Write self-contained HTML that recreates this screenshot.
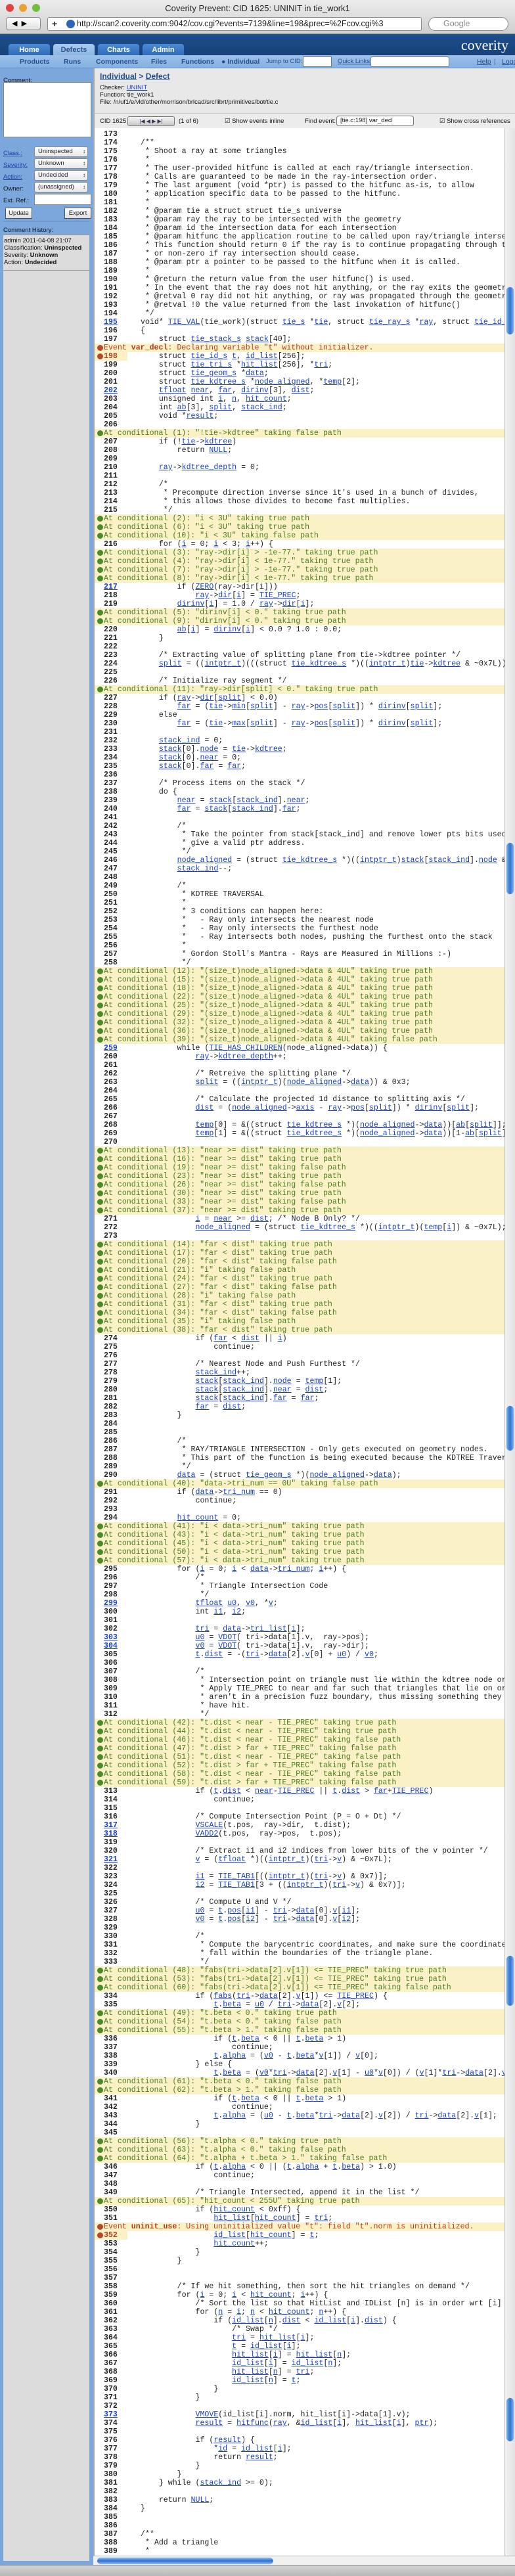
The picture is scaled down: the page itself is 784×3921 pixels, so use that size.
<!DOCTYPE html>
<html><head><meta charset="utf-8">
<style>
*{margin:0;padding:0;box-sizing:border-box}
body{width:784px;height:3921px;position:relative;overflow:hidden;background:#d8d8d8;font-family:"Liberation Sans",sans-serif}
.chrome{position:absolute;left:0;top:0;width:784px;height:52px;background:linear-gradient(#ececec,#cfcfcf);border-bottom:1px solid #8a8a8a}
.title{position:absolute;top:5px;left:0;width:784px;text-align:center;font-size:13px;color:#222}
.dot{position:absolute;top:6px;width:12px;height:12px;border-radius:50%}
.nb{position:absolute;top:26px;height:20px;border:1px solid #8c8c8c;border-radius:4px;background:linear-gradient(#fff,#e0e0e0)}
.url{position:absolute;left:72px;top:26px;width:570px;height:21px;background:#fff;border:1px solid #8c8c8c;border-radius:3px;font-size:12.5px;line-height:19px;padding-left:44px;color:#222;white-space:nowrap;overflow:hidden}
.gsearch{position:absolute;left:652px;top:26px;width:122px;height:21px;background:#fff;border:1px solid #8c8c8c;border-radius:11px;font-size:12.5px;line-height:19px;padding-left:22px;color:#888}
.hdr{position:absolute;left:0;top:52px;width:784px;height:32px;background:linear-gradient(#1c4f8e,#174178)}
.tab{position:absolute;top:66px;height:18px;width:65px;border-radius:5px 5px 0 0;background:linear-gradient(#4c8bd6,#2f6bb8);color:#fff;font-weight:bold;font-size:11px;text-align:center;line-height:18px;border:1px solid #1a4a8a;border-bottom:none}
.tab.act{background:linear-gradient(#a9cbf0,#8db6e3);color:#2a5590}
.logo{position:absolute;right:10px;top:56px;color:#fff;font-family:"Liberation Serif",serif;font-size:22px}
.navb{position:absolute;left:0;top:84px;width:784px;height:20px;background:linear-gradient(#9cc1ea,#84b0e0);border-bottom:1px solid #5d8cc4;font-size:10.5px;font-weight:bold;color:#24508f}
.navb span{position:absolute;top:4px}
.side{position:absolute;left:0;top:104px;width:142px;height:3801px;background:#7ba7dd}
.side .lbl{position:absolute;left:5px;font-size:9.5px;color:#111}
.side .lk{color:#1a3fa0;text-decoration:underline}
.sel{position:absolute;left:52px;width:82px;height:16px;background:linear-gradient(#fff,#e8e8e8);border:1px solid #8a8a8a;border-radius:3px;font-size:9.5px;line-height:14px;padding-left:5px;color:#222}
.sel:after{content:"\2195";position:absolute;right:3px;top:0;font-size:8px}
.btn{position:absolute;height:17px;border:1px solid #555;background:linear-gradient(#fff,#dcdcdc);font-size:9.5px;line-height:15px;text-align:center;color:#222}
.gbox{position:absolute;left:5px;top:253px;width:131px;height:3541px;background:#dcdcdc;border-top:1px solid #999}
.gbox div{font-size:9.5px;line-height:11px;color:#111;padding-left:1px}
.info{position:absolute;left:142px;top:104px;width:642px;height:68px;background:#e8e8e8;border-left:2px solid #aaa}
.info div{position:absolute;left:8px;font-size:9.5px;color:#111}
.tb{position:absolute;left:142px;top:172px;width:642px;height:23px;background:#ececec;border-top:1px solid #c8c8c8;border-left:2px solid #aaa;font-size:9.5px;color:#111}
.tb span{position:absolute;top:6px}
.pane{position:absolute;left:142px;top:195px;width:626px;height:3695px;background:#fff;overflow:hidden;border-left:2px solid #aaa;font-family:"Liberation Mono",monospace;font-size:11.6px;color:#222}
.rows{position:absolute;left:0;top:3px;width:1400px}
.r{height:13px;line-height:13px;position:relative;white-space:pre}
.n{position:absolute;left:14px;top:0;font-weight:bold;color:#222}
.c{position:absolute;left:70px;top:0}
.n u{color:#1a3fc0}
u{color:#1a3fc0;text-decoration:underline}
.e{height:13px;line-height:13px;background:#faf2c6;white-space:pre;position:relative;width:624px;padding-left:14px}
.g{color:#4b7d1f}
.rd{color:#b23a1c}
.e:before{content:"";position:absolute;left:4px;top:2px;width:9px;height:9px;border-radius:50%;background:#4b8a2a}
.e.rd:before{background:#b5482a}
.rn .n{color:#b23a1c;background:#faf2c6;left:0;width:50px;padding-left:14px}
.rn:before{content:"";position:absolute;left:4px;top:2px;width:9px;height:9px;border-radius:50%;background:#b5482a;z-index:2}
.vs{position:absolute;left:768px;top:195px;width:16px;height:3695px;background:linear-gradient(90deg,#f2f2f2,#e2e2e2);border-left:1px solid #bbb}
.th{position:absolute;left:2px;width:11px;border-radius:6px;background:linear-gradient(90deg,#7fb0ee,#2f73d2,#7fb0ee)}
.hs{position:absolute;left:142px;top:3890px;width:642px;height:14px;background:#f0f0f0;border-top:1px solid #bbb}
.hth{position:absolute;left:6px;top:2px;width:268px;height:10px;border-radius:6px;background:linear-gradient(#8fbcf2,#2f73d2,#8fbcf2)}
.stat{position:absolute;left:0;top:3904px;width:784px;height:17px;background:linear-gradient(#d4d4d4,#b8b8b8);border-top:1px solid #888}
</style></head><body>
<div class="chrome">
<div class="dot" style="left:9px;background:#e0443c"></div>
<div class="dot" style="left:29px;background:#e7a332"></div>
<div class="dot" style="left:49px;background:#6fbe3c"></div>
<div class="title">Coverity Prevent: CID 1625: UNINIT in tie_work1</div>
<div class="nb" style="left:9px;width:53px;font-size:11px;line-height:18px;padding-left:8px">◀ &nbsp;▶</div>
<div class="url"><span style="position:absolute;left:6px;top:0;font-weight:bold;font-size:14px">+</span><span style="position:absolute;left:28px;top:3px;width:13px;height:13px;border-radius:50%;background:#2b66b8"></span>http://scan2.coverity.com:9042/cov.cgi?events=7139&amp;line=198&amp;prec=%2Fcov.cgi%3</div>
<div class="gsearch">Google</div>
</div>
<div class="hdr"></div>
<div class="logo">coverity</div>
<div class="tab" style="left:12px">Home</div>
<div class="tab act" style="left:80px">Defects</div>
<div class="tab" style="left:148px">Charts</div>
<div class="tab" style="left:216px">Admin</div>
<div class="navb">
<span style="left:30px">Products</span><span style="left:97px">Runs</span><span style="left:146px">Components</span><span style="left:230px">Files</span><span style="left:276px">Functions</span><span style="left:337px">● Individual</span>
<span style="left:405px;font-weight:normal;font-size:9.5px">Jump to CID:</span>
<span style="left:461px;top:2px;width:44px;height:16px;background:#fff;border:1px solid #777"></span>
<span style="left:514px;font-weight:normal;font-size:9.5px;text-decoration:underline">Quick Links:</span>
<span style="left:564px;top:2px;width:120px;height:16px;background:#fff;border:1px solid #777;border-radius:3px"></span>
<span style="left:726px;font-weight:normal;text-decoration:underline">Help</span><span style="left:752px;font-weight:normal">|</span><span style="left:764px;font-weight:normal;text-decoration:underline">Logo</span>
</div>
<div class="side">
<div class="lbl" style="top:13px">Comment:</div>
<div style="position:absolute;left:5px;top:21px;width:134px;height:84px;background:#fff;border:1px solid #8a8a8a"></div>
<div class="lbl" style="top:124px"><span class="lk">Class.:</span></div><div class="sel" style="top:119px">Uninspected</div>
<div class="lbl" style="top:142px"><span class="lk">Severity:</span></div><div class="sel" style="top:137px">Unknown</div>
<div class="lbl" style="top:160px"><span class="lk">Action:</span></div><div class="sel" style="top:155px">Undecided</div>
<div class="lbl" style="top:178px">Owner:</div><div class="sel" style="top:173px">(unassigned)</div>
<div class="lbl" style="top:196px">Ext. Ref.:</div><div style="position:absolute;left:52px;top:191px;width:87px;height:17px;background:#fff;border:1px solid #8a8a8a"></div>
<div class="btn" style="left:8px;top:212px;width:41px">Update</div>
<div class="btn" style="left:98px;top:212px;width:41px">Export</div>
<div style="position:absolute;left:5px;top:232px;width:131px;height:1px;background:#5b86bd"></div>
<div class="lbl" style="top:241px">Comment History:</div>
<div class="gbox"><div style="margin-top:3px">admin 2011-04-08 21:07</div><div>Classification: <b>Uninspected</b></div><div>Severity: <b>Unknown</b></div><div>Action: <b>Undecided</b></div>
<div style="position:absolute;left:0;top:53px;width:131px;height:1px;background:#999"></div></div>
</div>
<div class="info">
<div style="top:5px;font-size:12px;font-weight:bold;color:#24508f"><span style="text-decoration:underline">Individual</span> &gt; <span style="text-decoration:underline">Defect</span></div>
<div style="top:24px">Checker: <span style="color:#1a3fc0;text-decoration:underline">UNINIT</span></div>
<div style="top:35px">Function: tie_work1</div>
<div style="top:46px">File: /n/uf1/e/vld/other/morrison/brlcad/src/librt/primitives/bot/tie.c</div>
</div>
<div class="tb">
<span style="left:8px">CID 1625</span>
<span style="left:50px;top:4px;width:72px;height:15px;border:1px solid #777;border-radius:3px;background:linear-gradient(#f4f4f4,#c8c8c8);font-size:8px;line-height:13px;text-align:center;color:#335">|◀ ◀ ▶ ▶|</span>
<span style="left:128px">(1 of 6)</span>
<span style="left:198px">☑ Show events inline</span>
<span style="left:320px">Find event:</span>
<span style="left:368px;top:3px;width:118px;height:16px;border:1px solid #777;border-radius:4px;background:#fff;padding-left:5px;line-height:14px">[tie.c:198] var_decl</span>
<span style="left:525px">☑ Show cross references</span>
</div>
<div class="pane"><div class="rows">
<div class="r"><span class="n">173</span></div>
<div class="r"><span class="n">174</span><span class="c">/**</span></div>
<div class="r"><span class="n">175</span><span class="c"> * Shoot a ray at some triangles</span></div>
<div class="r"><span class="n">176</span><span class="c"> *</span></div>
<div class="r"><span class="n">177</span><span class="c"> * The user-provided hitfunc is called at each ray/triangle intersection.</span></div>
<div class="r"><span class="n">178</span><span class="c"> * Calls are guaranteed to be made in the ray-intersection order.</span></div>
<div class="r"><span class="n">179</span><span class="c"> * The last argument (void *ptr) is passed to the hitfunc as-is, to allow</span></div>
<div class="r"><span class="n">180</span><span class="c"> * application specific data to be passed to the hitfunc.</span></div>
<div class="r"><span class="n">181</span><span class="c"> *</span></div>
<div class="r"><span class="n">182</span><span class="c"> * @param tie a struct struct tie_s universe</span></div>
<div class="r"><span class="n">183</span><span class="c"> * @param ray the ray to be intersected with the geometry</span></div>
<div class="r"><span class="n">184</span><span class="c"> * @param id the intersection data for each intersection</span></div>
<div class="r"><span class="n">185</span><span class="c"> * @param hitfunc the application routine to be called upon ray/triangle intersection.</span></div>
<div class="r"><span class="n">186</span><span class="c"> * This function should return 0 if the ray is to continue propagating through the geometry,</span></div>
<div class="r"><span class="n">187</span><span class="c"> * or non-zero if ray intersection should cease.</span></div>
<div class="r"><span class="n">188</span><span class="c"> * @param ptr a pointer to be passed to the hitfunc when it is called.</span></div>
<div class="r"><span class="n">189</span><span class="c"> *</span></div>
<div class="r"><span class="n">190</span><span class="c"> * @return the return value from the user hitfunc() is used.</span></div>
<div class="r"><span class="n">191</span><span class="c"> * In the event that the ray does not hit anything, or the ray exits the geometry space</span></div>
<div class="r"><span class="n">192</span><span class="c"> * @retval 0 ray did not hit anything, or ray was propagated through the geometry completely</span></div>
<div class="r"><span class="n">193</span><span class="c"> * @retval !0 the value returned from the last invokation of hitfunc()</span></div>
<div class="r"><span class="n">194</span><span class="c"> */</span></div>
<div class="r"><span class="n"><u>195</u></span><span class="c">void* <u>TIE_VAL</u>(tie_work)(struct <u>tie_s</u> *<u>tie</u>, struct <u>tie_ray_s</u> *<u>ray</u>, struct <u>tie_id_s</u> *<u>id</u>, void *(*<u>hitfunc</u>)(...)</span></div>
<div class="r"><span class="n">196</span><span class="c">{</span></div>
<div class="r"><span class="n">197</span><span class="c">    struct <u>tie_stack_s</u> <u>stack</u>[40];</span></div>
<div class="e rd">Event <b>var_decl</b>: Declaring variable "t" without initializer.</div>
<div class="r rn"><span class="n">198</span><span class="c">    struct <u>tie_id_s</u> <u>t</u>, <u>id_list</u>[256];</span></div>
<div class="r"><span class="n">199</span><span class="c">    struct <u>tie_tri_s</u> *<u>hit_list</u>[256], *<u>tri</u>;</span></div>
<div class="r"><span class="n">200</span><span class="c">    struct <u>tie_geom_s</u> *<u>data</u>;</span></div>
<div class="r"><span class="n">201</span><span class="c">    struct <u>tie_kdtree_s</u> *<u>node_aligned</u>, *<u>temp</u>[2];</span></div>
<div class="r"><span class="n"><u>202</u></span><span class="c">    <u>tfloat</u> <u>near</u>, <u>far</u>, <u>dirinv</u>[3], <u>dist</u>;</span></div>
<div class="r"><span class="n">203</span><span class="c">    unsigned int <u>i</u>, <u>n</u>, <u>hit_count</u>;</span></div>
<div class="r"><span class="n">204</span><span class="c">    int <u>ab</u>[3], <u>split</u>, <u>stack_ind</u>;</span></div>
<div class="r"><span class="n">205</span><span class="c">    void *<u>result</u>;</span></div>
<div class="r"><span class="n">206</span></div>
<div class="e g">At conditional (1): "!tie-&gt;kdtree" taking false path</div>
<div class="r"><span class="n">207</span><span class="c">    if (!<u>tie</u>-&gt;<u>kdtree</u>)</span></div>
<div class="r"><span class="n">208</span><span class="c">        return <u>NULL</u>;</span></div>
<div class="r"><span class="n">209</span></div>
<div class="r"><span class="n">210</span><span class="c">    <u>ray</u>-&gt;<u>kdtree_depth</u> = 0;</span></div>
<div class="r"><span class="n">211</span></div>
<div class="r"><span class="n">212</span><span class="c">    /*</span></div>
<div class="r"><span class="n">213</span><span class="c">     * Precompute direction inverse since it's used in a bunch of divides,</span></div>
<div class="r"><span class="n">214</span><span class="c">     * this allows those divides to become fast multiplies.</span></div>
<div class="r"><span class="n">215</span><span class="c">     */</span></div>
<div class="e g">At conditional (2): "i &lt; 3U" taking true path</div>
<div class="e g">At conditional (6): "i &lt; 3U" taking true path</div>
<div class="e g">At conditional (10): "i &lt; 3U" taking false path</div>
<div class="r"><span class="n">216</span><span class="c">    for (<u>i</u> = 0; <u>i</u> &lt; 3; <u>i</u>++) {</span></div>
<div class="e g">At conditional (3): "ray-&gt;dir[i] &gt; -1e-77." taking true path</div>
<div class="e g">At conditional (4): "ray-&gt;dir[i] &lt; 1e-77." taking true path</div>
<div class="e g">At conditional (7): "ray-&gt;dir[i] &gt; -1e-77." taking true path</div>
<div class="e g">At conditional (8): "ray-&gt;dir[i] &lt; 1e-77." taking true path</div>
<div class="r"><span class="n"><u>217</u></span><span class="c">        if (<u>ZERO</u>(ray-&gt;dir[i]))</span></div>
<div class="r"><span class="n">218</span><span class="c">            <u>ray</u>-&gt;<u>dir</u>[<u>i</u>] = <u>TIE_PREC</u>;</span></div>
<div class="r"><span class="n">219</span><span class="c">        <u>dirinv</u>[<u>i</u>] = 1.0 / <u>ray</u>-&gt;<u>dir</u>[<u>i</u>];</span></div>
<div class="e g">At conditional (5): "dirinv[i] &lt; 0." taking true path</div>
<div class="e g">At conditional (9): "dirinv[i] &lt; 0." taking true path</div>
<div class="r"><span class="n">220</span><span class="c">        <u>ab</u>[<u>i</u>] = <u>dirinv</u>[<u>i</u>] &lt; 0.0 ? 1.0 : 0.0;</span></div>
<div class="r"><span class="n">221</span><span class="c">    }</span></div>
<div class="r"><span class="n">222</span></div>
<div class="r"><span class="n">223</span><span class="c">    /* Extracting value of splitting plane from tie-&gt;kdtree pointer */</span></div>
<div class="r"><span class="n">224</span><span class="c">    <u>split</u> = ((<u>intptr_t</u>)(((struct <u>tie_kdtree_s</u> *)((<u>intptr_t</u>)<u>tie</u>-&gt;<u>kdtree</u> &amp; ~0x7L))-&gt;data)) &amp; 0x3;</span></div>
<div class="r"><span class="n">225</span></div>
<div class="r"><span class="n">226</span><span class="c">    /* Initialize ray segment */</span></div>
<div class="e g">At conditional (11): "ray-&gt;dir[split] &lt; 0." taking true path</div>
<div class="r"><span class="n">227</span><span class="c">    if (<u>ray</u>-&gt;<u>dir</u>[<u>split</u>] &lt; 0.0)</span></div>
<div class="r"><span class="n">228</span><span class="c">        <u>far</u> = (<u>tie</u>-&gt;<u>min</u>[<u>split</u>] - <u>ray</u>-&gt;<u>pos</u>[<u>split</u>]) * <u>dirinv</u>[<u>split</u>];</span></div>
<div class="r"><span class="n">229</span><span class="c">    else</span></div>
<div class="r"><span class="n">230</span><span class="c">        <u>far</u> = (<u>tie</u>-&gt;<u>max</u>[<u>split</u>] - <u>ray</u>-&gt;<u>pos</u>[<u>split</u>]) * <u>dirinv</u>[<u>split</u>];</span></div>
<div class="r"><span class="n">231</span></div>
<div class="r"><span class="n">232</span><span class="c">    <u>stack_ind</u> = 0;</span></div>
<div class="r"><span class="n">233</span><span class="c">    <u>stack</u>[0].<u>node</u> = <u>tie</u>-&gt;<u>kdtree</u>;</span></div>
<div class="r"><span class="n">234</span><span class="c">    <u>stack</u>[0].<u>near</u> = 0;</span></div>
<div class="r"><span class="n">235</span><span class="c">    <u>stack</u>[0].<u>far</u> = <u>far</u>;</span></div>
<div class="r"><span class="n">236</span></div>
<div class="r"><span class="n">237</span><span class="c">    /* Process items on the stack */</span></div>
<div class="r"><span class="n">238</span><span class="c">    do {</span></div>
<div class="r"><span class="n">239</span><span class="c">        <u>near</u> = <u>stack</u>[<u>stack_ind</u>].<u>near</u>;</span></div>
<div class="r"><span class="n">240</span><span class="c">        <u>far</u> = <u>stack</u>[<u>stack_ind</u>].<u>far</u>;</span></div>
<div class="r"><span class="n">241</span></div>
<div class="r"><span class="n">242</span><span class="c">        /*</span></div>
<div class="r"><span class="n">243</span><span class="c">         * Take the pointer from stack[stack_ind] and remove lower pts bits used to store data</span></div>
<div class="r"><span class="n">244</span><span class="c">         * give a valid ptr address.</span></div>
<div class="r"><span class="n">245</span><span class="c">         */</span></div>
<div class="r"><span class="n">246</span><span class="c">        <u>node_aligned</u> = (struct <u>tie_kdtree_s</u> *)((<u>intptr_t</u>)<u>stack</u>[<u>stack_ind</u>].<u>node</u> &amp; ~0x7L);</span></div>
<div class="r"><span class="n">247</span><span class="c">        <u>stack_ind</u>--;</span></div>
<div class="r"><span class="n">248</span></div>
<div class="r"><span class="n">249</span><span class="c">        /*</span></div>
<div class="r"><span class="n">250</span><span class="c">         * KDTREE TRAVERSAL</span></div>
<div class="r"><span class="n">251</span><span class="c">         *</span></div>
<div class="r"><span class="n">252</span><span class="c">         * 3 conditions can happen here:</span></div>
<div class="r"><span class="n">253</span><span class="c">         *   - Ray only intersects the nearest node</span></div>
<div class="r"><span class="n">254</span><span class="c">         *   - Ray only intersects the furthest node</span></div>
<div class="r"><span class="n">255</span><span class="c">         *   - Ray intersects both nodes, pushing the furthest onto the stack</span></div>
<div class="r"><span class="n">256</span><span class="c">         *</span></div>
<div class="r"><span class="n">257</span><span class="c">         * Gordon Stoll's Mantra - Rays are Measured in Millions :-)</span></div>
<div class="r"><span class="n">258</span><span class="c">         */</span></div>
<div class="e g">At conditional (12): "(size_t)node_aligned-&gt;data &amp; 4UL" taking true path</div>
<div class="e g">At conditional (15): "(size_t)node_aligned-&gt;data &amp; 4UL" taking true path</div>
<div class="e g">At conditional (18): "(size_t)node_aligned-&gt;data &amp; 4UL" taking true path</div>
<div class="e g">At conditional (22): "(size_t)node_aligned-&gt;data &amp; 4UL" taking true path</div>
<div class="e g">At conditional (25): "(size_t)node_aligned-&gt;data &amp; 4UL" taking true path</div>
<div class="e g">At conditional (29): "(size_t)node_aligned-&gt;data &amp; 4UL" taking true path</div>
<div class="e g">At conditional (32): "(size_t)node_aligned-&gt;data &amp; 4UL" taking true path</div>
<div class="e g">At conditional (36): "(size_t)node_aligned-&gt;data &amp; 4UL" taking true path</div>
<div class="e g">At conditional (39): "(size_t)node_aligned-&gt;data &amp; 4UL" taking false path</div>
<div class="r"><span class="n"><u>259</u></span><span class="c">        while (<u>TIE_HAS_CHILDREN</u>(node_aligned-&gt;data)) {</span></div>
<div class="r"><span class="n">260</span><span class="c">            <u>ray</u>-&gt;<u>kdtree_depth</u>++;</span></div>
<div class="r"><span class="n">261</span></div>
<div class="r"><span class="n">262</span><span class="c">            /* Retreive the splitting plane */</span></div>
<div class="r"><span class="n">263</span><span class="c">            <u>split</u> = ((<u>intptr_t</u>)(<u>node_aligned</u>-&gt;<u>data</u>)) &amp; 0x3;</span></div>
<div class="r"><span class="n">264</span></div>
<div class="r"><span class="n">265</span><span class="c">            /* Calculate the projected 1d distance to splitting axis */</span></div>
<div class="r"><span class="n">266</span><span class="c">            <u>dist</u> = (<u>node_aligned</u>-&gt;<u>axis</u> - <u>ray</u>-&gt;<u>pos</u>[<u>split</u>]) * <u>dirinv</u>[<u>split</u>];</span></div>
<div class="r"><span class="n">267</span></div>
<div class="r"><span class="n">268</span><span class="c">            <u>temp</u>[0] = &amp;((struct <u>tie_kdtree_s</u> *)(<u>node_aligned</u>-&gt;<u>data</u>))[<u>ab</u>[<u>split</u>]];</span></div>
<div class="r"><span class="n">269</span><span class="c">            <u>temp</u>[1] = &amp;((struct <u>tie_kdtree_s</u> *)(<u>node_aligned</u>-&gt;<u>data</u>))[1-<u>ab</u>[<u>split</u>]];</span></div>
<div class="r"><span class="n">270</span></div>
<div class="e g">At conditional (13): "near &gt;= dist" taking true path</div>
<div class="e g">At conditional (16): "near &gt;= dist" taking true path</div>
<div class="e g">At conditional (19): "near &gt;= dist" taking false path</div>
<div class="e g">At conditional (23): "near &gt;= dist" taking true path</div>
<div class="e g">At conditional (26): "near &gt;= dist" taking false path</div>
<div class="e g">At conditional (30): "near &gt;= dist" taking true path</div>
<div class="e g">At conditional (33): "near &gt;= dist" taking false path</div>
<div class="e g">At conditional (37): "near &gt;= dist" taking true path</div>
<div class="r"><span class="n">271</span><span class="c">            <u>i</u> = <u>near</u> &gt;= <u>dist</u>; /* Node B Only? */</span></div>
<div class="r"><span class="n">272</span><span class="c">            <u>node_aligned</u> = (struct <u>tie_kdtree_s</u> *)((<u>intptr_t</u>)(<u>temp</u>[<u>i</u>]) &amp; ~0x7L);</span></div>
<div class="r"><span class="n">273</span></div>
<div class="e g">At conditional (14): "far &lt; dist" taking true path</div>
<div class="e g">At conditional (17): "far &lt; dist" taking true path</div>
<div class="e g">At conditional (20): "far &lt; dist" taking false path</div>
<div class="e g">At conditional (21): "i" taking false path</div>
<div class="e g">At conditional (24): "far &lt; dist" taking true path</div>
<div class="e g">At conditional (27): "far &lt; dist" taking false path</div>
<div class="e g">At conditional (28): "i" taking false path</div>
<div class="e g">At conditional (31): "far &lt; dist" taking true path</div>
<div class="e g">At conditional (34): "far &lt; dist" taking false path</div>
<div class="e g">At conditional (35): "i" taking false path</div>
<div class="e g">At conditional (38): "far &lt; dist" taking true path</div>
<div class="r"><span class="n">274</span><span class="c">            if (<u>far</u> &lt; <u>dist</u> || <u>i</u>)</span></div>
<div class="r"><span class="n">275</span><span class="c">                continue;</span></div>
<div class="r"><span class="n">276</span></div>
<div class="r"><span class="n">277</span><span class="c">            /* Nearest Node and Push Furthest */</span></div>
<div class="r"><span class="n">278</span><span class="c">            <u>stack_ind</u>++;</span></div>
<div class="r"><span class="n">279</span><span class="c">            <u>stack</u>[<u>stack_ind</u>].<u>node</u> = <u>temp</u>[1];</span></div>
<div class="r"><span class="n">280</span><span class="c">            <u>stack</u>[<u>stack_ind</u>].<u>near</u> = <u>dist</u>;</span></div>
<div class="r"><span class="n">281</span><span class="c">            <u>stack</u>[<u>stack_ind</u>].<u>far</u> = <u>far</u>;</span></div>
<div class="r"><span class="n">282</span><span class="c">            <u>far</u> = <u>dist</u>;</span></div>
<div class="r"><span class="n">283</span><span class="c">        }</span></div>
<div class="r"><span class="n">284</span></div>
<div class="r"><span class="n">285</span></div>
<div class="r"><span class="n">286</span><span class="c">        /*</span></div>
<div class="r"><span class="n">287</span><span class="c">         * RAY/TRIANGLE INTERSECTION - Only gets executed on geometry nodes.</span></div>
<div class="r"><span class="n">288</span><span class="c">         * This part of the function is being executed because the KDTREE Traversal is Complete.</span></div>
<div class="r"><span class="n">289</span><span class="c">         */</span></div>
<div class="r"><span class="n">290</span><span class="c">        <u>data</u> = (struct <u>tie_geom_s</u> *)(<u>node_aligned</u>-&gt;<u>data</u>);</span></div>
<div class="e g">At conditional (40): "data-&gt;tri_num == 0U" taking false path</div>
<div class="r"><span class="n">291</span><span class="c">        if (<u>data</u>-&gt;<u>tri_num</u> == 0)</span></div>
<div class="r"><span class="n">292</span><span class="c">            continue;</span></div>
<div class="r"><span class="n">293</span></div>
<div class="r"><span class="n">294</span><span class="c">        <u>hit_count</u> = 0;</span></div>
<div class="e g">At conditional (41): "i &lt; data-&gt;tri_num" taking true path</div>
<div class="e g">At conditional (43): "i &lt; data-&gt;tri_num" taking true path</div>
<div class="e g">At conditional (45): "i &lt; data-&gt;tri_num" taking true path</div>
<div class="e g">At conditional (50): "i &lt; data-&gt;tri_num" taking true path</div>
<div class="e g">At conditional (57): "i &lt; data-&gt;tri_num" taking true path</div>
<div class="r"><span class="n">295</span><span class="c">        for (<u>i</u> = 0; <u>i</u> &lt; <u>data</u>-&gt;<u>tri_num</u>; <u>i</u>++) {</span></div>
<div class="r"><span class="n">296</span><span class="c">            /*</span></div>
<div class="r"><span class="n">297</span><span class="c">             * Triangle Intersection Code</span></div>
<div class="r"><span class="n">298</span><span class="c">             */</span></div>
<div class="r"><span class="n"><u>299</u></span><span class="c">            <u>tfloat</u> <u>u0</u>, <u>v0</u>, *<u>v</u>;</span></div>
<div class="r"><span class="n">300</span><span class="c">            int <u>i1</u>, <u>i2</u>;</span></div>
<div class="r"><span class="n">301</span></div>
<div class="r"><span class="n">302</span><span class="c">            <u>tri</u> = <u>data</u>-&gt;<u>tri_list</u>[<u>i</u>];</span></div>
<div class="r"><span class="n"><u>303</u></span><span class="c">            <u>u0</u> = <u>VDOT</u>( tri-&gt;data[1].v,  ray-&gt;pos);</span></div>
<div class="r"><span class="n"><u>304</u></span><span class="c">            <u>v0</u> = <u>VDOT</u>( tri-&gt;data[1].v,  ray-&gt;dir);</span></div>
<div class="r"><span class="n">305</span><span class="c">            <u>t</u>.<u>dist</u> = -(<u>tri</u>-&gt;<u>data</u>[2].<u>v</u>[0] + <u>u0</u>) / <u>v0</u>;</span></div>
<div class="r"><span class="n">306</span></div>
<div class="r"><span class="n">307</span><span class="c">            /*</span></div>
<div class="r"><span class="n">308</span><span class="c">             * Intersection point on triangle must lie within the kdtree node or it is rejected</span></div>
<div class="r"><span class="n">309</span><span class="c">             * Apply TIE_PREC to near and far such that triangles that lie on orthogonal planes</span></div>
<div class="r"><span class="n">310</span><span class="c">             * aren't in a precision fuzz boundary, thus missing something they should actually</span></div>
<div class="r"><span class="n">311</span><span class="c">             * have hit.</span></div>
<div class="r"><span class="n">312</span><span class="c">             */</span></div>
<div class="e g">At conditional (42): "t.dist &lt; near - TIE_PREC" taking true path</div>
<div class="e g">At conditional (44): "t.dist &lt; near - TIE_PREC" taking true path</div>
<div class="e g">At conditional (46): "t.dist &lt; near - TIE_PREC" taking false path</div>
<div class="e g">At conditional (47): "t.dist &gt; far + TIE_PREC" taking false path</div>
<div class="e g">At conditional (51): "t.dist &lt; near - TIE_PREC" taking false path</div>
<div class="e g">At conditional (52): "t.dist &gt; far + TIE_PREC" taking false path</div>
<div class="e g">At conditional (58): "t.dist &lt; near - TIE_PREC" taking false path</div>
<div class="e g">At conditional (59): "t.dist &gt; far + TIE_PREC" taking false path</div>
<div class="r"><span class="n">313</span><span class="c">            if (<u>t</u>.<u>dist</u> &lt; <u>near</u>-<u>TIE_PREC</u> || <u>t</u>.<u>dist</u> &gt; <u>far</u>+<u>TIE_PREC</u>)</span></div>
<div class="r"><span class="n">314</span><span class="c">                continue;</span></div>
<div class="r"><span class="n">315</span></div>
<div class="r"><span class="n">316</span><span class="c">            /* Compute Intersection Point (P = O + Dt) */</span></div>
<div class="r"><span class="n"><u>317</u></span><span class="c">            <u>VSCALE</u>(t.pos,  ray-&gt;dir,  t.dist);</span></div>
<div class="r"><span class="n"><u>318</u></span><span class="c">            <u>VADD2</u>(t.pos,  ray-&gt;pos,  t.pos);</span></div>
<div class="r"><span class="n">319</span></div>
<div class="r"><span class="n">320</span><span class="c">            /* Extract i1 and i2 indices from lower bits of the v pointer */</span></div>
<div class="r"><span class="n"><u>321</u></span><span class="c">            <u>v</u> = (<u>tfloat</u> *)((<u>intptr_t</u>)(<u>tri</u>-&gt;<u>v</u>) &amp; ~0x7L);</span></div>
<div class="r"><span class="n">322</span></div>
<div class="r"><span class="n">323</span><span class="c">            <u>i1</u> = <u>TIE_TAB1</u>[((<u>intptr_t</u>)(<u>tri</u>-&gt;<u>v</u>) &amp; 0x7)];</span></div>
<div class="r"><span class="n">324</span><span class="c">            <u>i2</u> = <u>TIE_TAB1</u>[3 + ((<u>intptr_t</u>)(<u>tri</u>-&gt;<u>v</u>) &amp; 0x7)];</span></div>
<div class="r"><span class="n">325</span></div>
<div class="r"><span class="n">326</span><span class="c">            /* Compute U and V */</span></div>
<div class="r"><span class="n">327</span><span class="c">            <u>u0</u> = <u>t</u>.<u>pos</u>[<u>i1</u>] - <u>tri</u>-&gt;<u>data</u>[0].<u>v</u>[<u>i1</u>];</span></div>
<div class="r"><span class="n">328</span><span class="c">            <u>v0</u> = <u>t</u>.<u>pos</u>[<u>i2</u>] - <u>tri</u>-&gt;<u>data</u>[0].<u>v</u>[<u>i2</u>];</span></div>
<div class="r"><span class="n">329</span></div>
<div class="r"><span class="n">330</span><span class="c">            /*</span></div>
<div class="r"><span class="n">331</span><span class="c">             * Compute the barycentric coordinates, and make sure the coordinates</span></div>
<div class="r"><span class="n">332</span><span class="c">             * fall within the boundaries of the triangle plane.</span></div>
<div class="r"><span class="n">333</span><span class="c">             */</span></div>
<div class="e g">At conditional (48): "fabs(tri-&gt;data[2].v[1]) &lt;= TIE_PREC" taking true path</div>
<div class="e g">At conditional (53): "fabs(tri-&gt;data[2].v[1]) &lt;= TIE_PREC" taking true path</div>
<div class="e g">At conditional (60): "fabs(tri-&gt;data[2].v[1]) &lt;= TIE_PREC" taking false path</div>
<div class="r"><span class="n">334</span><span class="c">            if (<u>fabs</u>(<u>tri</u>-&gt;<u>data</u>[2].<u>v</u>[1]) &lt;= <u>TIE_PREC</u>) {</span></div>
<div class="r"><span class="n">335</span><span class="c">                <u>t</u>.<u>beta</u> = <u>u0</u> / <u>tri</u>-&gt;<u>data</u>[2].<u>v</u>[2];</span></div>
<div class="e g">At conditional (49): "t.beta &lt; 0." taking true path</div>
<div class="e g">At conditional (54): "t.beta &lt; 0." taking false path</div>
<div class="e g">At conditional (55): "t.beta &gt; 1." taking false path</div>
<div class="r"><span class="n">336</span><span class="c">                if (<u>t</u>.<u>beta</u> &lt; 0 || <u>t</u>.<u>beta</u> &gt; 1)</span></div>
<div class="r"><span class="n">337</span><span class="c">                    continue;</span></div>
<div class="r"><span class="n">338</span><span class="c">                <u>t</u>.<u>alpha</u> = (<u>v0</u> - <u>t</u>.<u>beta</u>*<u>v</u>[1]) / <u>v</u>[0];</span></div>
<div class="r"><span class="n">339</span><span class="c">            } else {</span></div>
<div class="r"><span class="n">340</span><span class="c">                <u>t</u>.<u>beta</u> = (<u>v0</u>*<u>tri</u>-&gt;<u>data</u>[2].<u>v</u>[1] - <u>u0</u>*<u>v</u>[0]) / (<u>v</u>[1]*<u>tri</u>-&gt;<u>data</u>[2].<u>v</u>[0]-<u>tri</u>-&gt;<u>data</u>[2].<u>v</u>[1]*<u>v</u>[0]);</span></div>
<div class="e g">At conditional (61): "t.beta &lt; 0." taking false path</div>
<div class="e g">At conditional (62): "t.beta &gt; 1." taking false path</div>
<div class="r"><span class="n">341</span><span class="c">                if (<u>t</u>.<u>beta</u> &lt; 0 || <u>t</u>.<u>beta</u> &gt; 1)</span></div>
<div class="r"><span class="n">342</span><span class="c">                    continue;</span></div>
<div class="r"><span class="n">343</span><span class="c">                <u>t</u>.<u>alpha</u> = (<u>u0</u> - <u>t</u>.<u>beta</u>*<u>tri</u>-&gt;<u>data</u>[2].<u>v</u>[2]) / <u>tri</u>-&gt;<u>data</u>[2].<u>v</u>[1];</span></div>
<div class="r"><span class="n">344</span><span class="c">            }</span></div>
<div class="r"><span class="n">345</span></div>
<div class="e g">At conditional (56): "t.alpha &lt; 0." taking true path</div>
<div class="e g">At conditional (63): "t.alpha &lt; 0." taking false path</div>
<div class="e g">At conditional (64): "t.alpha + t.beta &gt; 1." taking false path</div>
<div class="r"><span class="n">346</span><span class="c">            if (<u>t</u>.<u>alpha</u> &lt; 0 || (<u>t</u>.<u>alpha</u> + <u>t</u>.<u>beta</u>) &gt; 1.0)</span></div>
<div class="r"><span class="n">347</span><span class="c">                continue;</span></div>
<div class="r"><span class="n">348</span></div>
<div class="r"><span class="n">349</span><span class="c">            /* Triangle Intersected, append it in the list */</span></div>
<div class="e g">At conditional (65): "hit_count &lt; 255U" taking true path</div>
<div class="r"><span class="n">350</span><span class="c">            if (<u>hit_count</u> &lt; 0xff) {</span></div>
<div class="r"><span class="n">351</span><span class="c">                <u>hit_list</u>[<u>hit_count</u>] = <u>tri</u>;</span></div>
<div class="e rd">Event <b>uninit_use</b>: Using uninitialized value "t": field "t".norm is uninitialized.</div>
<div class="r rn"><span class="n">352</span><span class="c">                <u>id_list</u>[<u>hit_count</u>] = <u>t</u>;</span></div>
<div class="r"><span class="n">353</span><span class="c">                <u>hit_count</u>++;</span></div>
<div class="r"><span class="n">354</span><span class="c">            }</span></div>
<div class="r"><span class="n">355</span><span class="c">        }</span></div>
<div class="r"><span class="n">356</span></div>
<div class="r"><span class="n">357</span></div>
<div class="r"><span class="n">358</span><span class="c">        /* If we hit something, then sort the hit triangles on demand */</span></div>
<div class="r"><span class="n">359</span><span class="c">        for (<u>i</u> = 0; <u>i</u> &lt; <u>hit_count</u>; <u>i</u>++) {</span></div>
<div class="r"><span class="n">360</span><span class="c">            /* Sort the list so that HitList and IDList [n] is in order wrt [i] */</span></div>
<div class="r"><span class="n">361</span><span class="c">            for (<u>n</u> = <u>i</u>; <u>n</u> &lt; <u>hit_count</u>; <u>n</u>++) {</span></div>
<div class="r"><span class="n">362</span><span class="c">                if (<u>id_list</u>[<u>n</u>].<u>dist</u> &lt; <u>id_list</u>[<u>i</u>].<u>dist</u>) {</span></div>
<div class="r"><span class="n">363</span><span class="c">                    /* Swap */</span></div>
<div class="r"><span class="n">364</span><span class="c">                    <u>tri</u> = <u>hit_list</u>[<u>i</u>];</span></div>
<div class="r"><span class="n">365</span><span class="c">                    <u>t</u> = <u>id_list</u>[<u>i</u>];</span></div>
<div class="r"><span class="n">366</span><span class="c">                    <u>hit_list</u>[<u>i</u>] = <u>hit_list</u>[<u>n</u>];</span></div>
<div class="r"><span class="n">367</span><span class="c">                    <u>id_list</u>[<u>i</u>] = <u>id_list</u>[<u>n</u>];</span></div>
<div class="r"><span class="n">368</span><span class="c">                    <u>hit_list</u>[<u>n</u>] = <u>tri</u>;</span></div>
<div class="r"><span class="n">369</span><span class="c">                    <u>id_list</u>[<u>n</u>] = <u>t</u>;</span></div>
<div class="r"><span class="n">370</span><span class="c">                }</span></div>
<div class="r"><span class="n">371</span><span class="c">            }</span></div>
<div class="r"><span class="n">372</span></div>
<div class="r"><span class="n"><u>373</u></span><span class="c">            <u>VMOVE</u>(id_list[i].norm, hit_list[i]-&gt;data[1].v);</span></div>
<div class="r"><span class="n">374</span><span class="c">            <u>result</u> = <u>hitfunc</u>(<u>ray</u>, &amp;<u>id_list</u>[<u>i</u>], <u>hit_list</u>[<u>i</u>], <u>ptr</u>);</span></div>
<div class="r"><span class="n">375</span></div>
<div class="r"><span class="n">376</span><span class="c">            if (<u>result</u>) {</span></div>
<div class="r"><span class="n">377</span><span class="c">                *<u>id</u> = <u>id_list</u>[<u>i</u>];</span></div>
<div class="r"><span class="n">378</span><span class="c">                return <u>result</u>;</span></div>
<div class="r"><span class="n">379</span><span class="c">            }</span></div>
<div class="r"><span class="n">380</span><span class="c">        }</span></div>
<div class="r"><span class="n">381</span><span class="c">    } while (<u>stack_ind</u> &gt;= 0);</span></div>
<div class="r"><span class="n">382</span></div>
<div class="r"><span class="n">383</span><span class="c">    return <u>NULL</u>;</span></div>
<div class="r"><span class="n">384</span><span class="c">}</span></div>
<div class="r"><span class="n">385</span></div>
<div class="r"><span class="n">386</span></div>
<div class="r"><span class="n">387</span><span class="c">/**</span></div>
<div class="r"><span class="n">388</span><span class="c"> * Add a triangle</span></div>
<div class="r"><span class="n">389</span><span class="c"> *</span></div>
</div></div>
<div class="vs">
<div class="th" style="top:242px;height:72px"></div>
<div class="th" style="top:1088px;height:78px"></div>
<div class="th" style="top:1945px;height:68px"></div>
<div class="th" style="top:2782px;height:76px"></div>
<div class="th" style="top:3455px;height:66px"></div>
</div>
<div class="hs"><div class="hth"></div></div>
<div class="stat"></div>
</body></html>
